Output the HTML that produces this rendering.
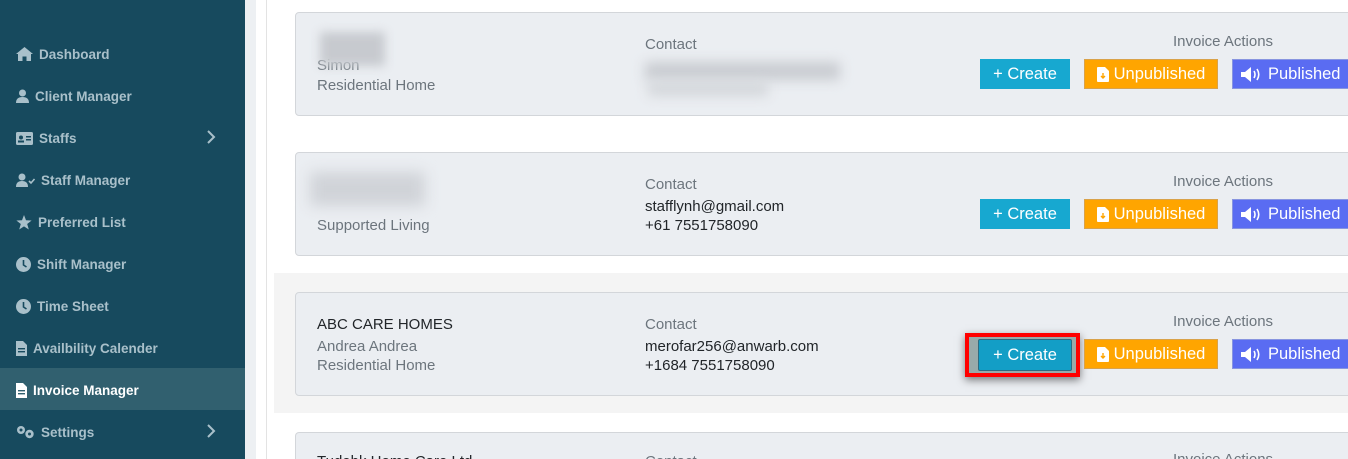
<!DOCTYPE html>
<html style="width:1348px;height:459px;overflow:hidden"><head><meta charset="utf-8"><style>
*{margin:0;padding:0;box-sizing:border-box}
body{width:1348px;height:459px;overflow:hidden;background:#fff;font-family:"Liberation Sans",sans-serif;position:relative}
.sb{position:absolute;left:0;top:0;width:245px;height:459px;background:#174a5e}
.gap{position:absolute;left:245px;top:0;width:11px;height:459px;background:#edf0f3}
.vl{position:absolute;left:266px;top:0;width:1px;height:459px;background:#e3e3e3}
.it{position:absolute;left:16px;color:#a9c0ca;font-size:13.5px;font-weight:bold;display:flex;align-items:center;height:20px}
.it svg{margin-right:6px}
.act{position:absolute;left:0;top:368px;width:245px;height:42px;background:#31606f}
.chev{position:absolute;left:206px}
.hl{position:absolute;left:274px;top:273px;right:0;height:140px;background:#f4f4f4}
.card{position:absolute;left:295px;width:1100px;height:104px;background:#ebeef2;border:1px solid #d3d6da;border-radius:4px}
.t{position:absolute;font-size:15px;color:#6c757d;white-space:nowrap}
.d{color:#212529}
.btn{position:absolute;height:30px;color:#fff;font-size:16.5px;display:flex;align-items:center;justify-content:center}
.btn svg{margin-right:5px}
.bc{left:980px;width:90px;background:#17a8d0}
.bu{left:1084px;width:134px;background:#ffa500;border:1px solid #d9a24a}
.bp{left:1232px;width:120px;background:#5a6cf2;border:1px solid #8895e0;justify-content:flex-start;padding-left:8px}
.blur{position:absolute;background:#c9ccd1;filter:blur(5px)}
</style></head><body>
<div class="sb"></div>
<div class="act"></div>
<div class="gap"></div>
<div class="vl"></div>

<div class="it" style="top:44px"><svg width="17" height="14" viewBox="0 0 17 14"><path d="M8.5 0 L17 7 H15 V14 H10.5 V9.5 H6.5 V14 H2 V7 H0Z" fill="#a9c0ca"/></svg>Dashboard</div>
<div class="it" style="top:86px"><svg width="13" height="14" viewBox="0 0 13 14"><circle cx="6.5" cy="4" r="3.5" fill="#a9c0ca"/><path d="M0 14 Q0 8 6.5 8 Q13 8 13 14Z" fill="#a9c0ca"/></svg>Client Manager</div>
<div class="it" style="top:128px"><svg width="17" height="13" viewBox="0 0 17 13"><rect x="0" y="0" width="17" height="13" rx="1.5" fill="#a9c0ca"/><circle cx="5" cy="5.5" r="2" fill="#174a5e"/><rect x="2" y="8.5" width="6" height="2" fill="#174a5e"/><rect x="10" y="4" width="5" height="1.5" fill="#174a5e"/><rect x="10" y="7" width="5" height="1.5" fill="#174a5e"/></svg>Staffs</div>
<svg class="chev" style="top:130px" width="10" height="14" viewBox="0 0 10 14"><path d="M2 1 L8 7 L2 13" stroke="#a9c0ca" stroke-width="2" fill="none"/></svg>
<div class="it" style="top:170px"><svg width="19" height="14" viewBox="0 0 19 14"><circle cx="6" cy="4" r="3.5" fill="#a9c0ca"/><path d="M0 14 Q0 8 6 8 Q12 8 12 14Z" fill="#a9c0ca"/><path d="M13 8 L15 10 L18.5 6" stroke="#a9c0ca" stroke-width="1.6" fill="none"/></svg>Staff Manager</div>
<div class="it" style="top:212px"><svg width="16" height="15" viewBox="0 0 16 15"><path d="M8 0 L10 5.2 L15.6 5.5 L11.2 9 L12.8 14.5 L8 11.4 L3.2 14.5 L4.8 9 L0.4 5.5 L6 5.2Z" fill="#a9c0ca"/></svg>Preferred List</div>
<div class="it" style="top:254px"><svg width="15" height="15" viewBox="0 0 15 15"><circle cx="7.5" cy="7.5" r="7.5" fill="#a9c0ca"/><path d="M7.5 3 V8 L10.5 10" stroke="#174a5e" stroke-width="1.6" fill="none"/></svg>Shift Manager</div>
<div class="it" style="top:296px"><svg width="15" height="15" viewBox="0 0 15 15"><circle cx="7.5" cy="7.5" r="7.5" fill="#a9c0ca"/><path d="M7.5 3 V8 L10.5 10" stroke="#174a5e" stroke-width="1.6" fill="none"/></svg>Time Sheet</div>
<div class="it" style="top:338px"><svg width="11" height="15" viewBox="0 0 11 15"><path d="M0 0 H7 L11 4 V15 H0Z" fill="#a9c0ca"/><rect x="2" y="7" width="7" height="1.4" fill="#174a5e"/><rect x="2" y="10" width="7" height="1.4" fill="#174a5e"/></svg>Availbility Calender</div>
<div class="it" style="top:380px;color:#fff"><svg width="11" height="15" viewBox="0 0 11 15"><path d="M0 0 H7 L11 4 V15 H0Z" fill="#fff"/><rect x="2" y="7" width="7" height="1.4" fill="#31606f"/><rect x="2" y="10" width="7" height="1.4" fill="#31606f"/></svg>Invoice Manager</div>
<div class="it" style="top:422px"><svg width="19" height="14" viewBox="0 0 19 14"><circle cx="5" cy="5" r="4" fill="#a9c0ca"/><circle cx="5" cy="5" r="1.5" fill="#174a5e"/><circle cx="13.5" cy="9" r="4.2" fill="#a9c0ca"/><circle cx="13.5" cy="9" r="1.5" fill="#174a5e"/></svg>Settings</div>
<svg class="chev" style="top:424px" width="10" height="14" viewBox="0 0 10 14"><path d="M2 1 L8 7 L2 13" stroke="#a9c0ca" stroke-width="2" fill="none"/></svg>

<div class="hl"></div>

<!-- card 1 -->
<div class="card" style="top:12px"></div>
<div class="t" style="left:317px;top:57px">Simon</div>
<div class="blur" style="left:320px;top:32px;width:65px;height:34px;background:#c7cacf"></div>
<div class="t" style="left:317px;top:77px">Residential Home</div>
<div class="t" style="left:645px;top:36px">Contact</div>
<div class="blur" style="left:645px;top:62px;width:195px;height:18px;filter:blur(6px)"></div>
<div class="blur" style="left:648px;top:82px;width:120px;height:14px;filter:blur(6px);background:#d3d6da"></div>
<div class="t" style="left:1173px;top:33px">Invoice Actions</div>
<div class="btn bc" style="top:59px">+ Create</div>
<div class="btn bu" style="top:59px"><svg width="12" height="15" viewBox="0 0 12 15"><path d="M0 1 Q0 0 1 0 H8 L12 4 V14 Q12 15 11 15 H1 Q0 15 0 14Z" fill="#fff"/><path d="M6 6 V11 M4 9 L6 11 L8 9" stroke="#ffa500" stroke-width="1.4" fill="none"/></svg>Unpublished</div>
<div class="btn bp" style="top:59px"><svg width="22" height="15" viewBox="0 0 22 15"><path d="M0 5 H4 L10 0 V15 L4 10 H0Z" fill="#fff"/><path d="M13 4 Q15 7.5 13 11 M16 2 Q19.5 7.5 16 13" stroke="#fff" stroke-width="1.6" fill="none"/></svg>Published</div>

<!-- card 2 -->
<div class="card" style="top:152px"></div>
<div class="blur" style="left:310px;top:172px;width:115px;height:34px;background:#d0d3d8;filter:blur(7px)"></div>
<div class="t" style="left:317px;top:217px">Supported Living</div>
<div class="t" style="left:645px;top:176px">Contact</div>
<div class="t d" style="left:645px;top:198px">stafflynh@gmail.com</div>
<div class="t d" style="left:645px;top:217px">+61 7551758090</div>
<div class="t" style="left:1173px;top:173px">Invoice Actions</div>
<div class="btn bc" style="top:199px">+ Create</div>
<div class="btn bu" style="top:199px"><svg width="12" height="15" viewBox="0 0 12 15"><path d="M0 1 Q0 0 1 0 H8 L12 4 V14 Q12 15 11 15 H1 Q0 15 0 14Z" fill="#fff"/><path d="M6 6 V11 M4 9 L6 11 L8 9" stroke="#ffa500" stroke-width="1.4" fill="none"/></svg>Unpublished</div>
<div class="btn bp" style="top:199px"><svg width="22" height="15" viewBox="0 0 22 15"><path d="M0 5 H4 L10 0 V15 L4 10 H0Z" fill="#fff"/><path d="M13 4 Q15 7.5 13 11 M16 2 Q19.5 7.5 16 13" stroke="#fff" stroke-width="1.6" fill="none"/></svg>Published</div>

<!-- card 3 -->
<div class="card" style="top:292px"></div>
<div class="t d" style="left:317px;top:316px">ABC CARE HOMES</div>
<div class="t" style="left:317px;top:338px">Andrea Andrea</div>
<div class="t" style="left:317px;top:357px">Residential Home</div>
<div class="t" style="left:645px;top:316px">Contact</div>
<div class="t d" style="left:645px;top:338px">merofar256@anwarb.com</div>
<div class="t d" style="left:645px;top:357px">+1684 7551758090</div>
<div class="t" style="left:1173px;top:313px">Invoice Actions</div>
<div style="position:absolute;left:965px;top:333px;width:115px;height:44px;border:4px solid #f00;box-shadow:0 3px 8px rgba(0,0,0,.5);background:#9aa"></div>
<div class="btn" style="left:978px;top:339px;width:94px;height:32px;background:#139ec6;border:1px solid #2e6b80;border-radius:2px">+ Create</div>
<div class="btn bu" style="top:339px"><svg width="12" height="15" viewBox="0 0 12 15"><path d="M0 1 Q0 0 1 0 H8 L12 4 V14 Q12 15 11 15 H1 Q0 15 0 14Z" fill="#fff"/><path d="M6 6 V11 M4 9 L6 11 L8 9" stroke="#ffa500" stroke-width="1.4" fill="none"/></svg>Unpublished</div>
<div class="btn bp" style="top:339px"><svg width="22" height="15" viewBox="0 0 22 15"><path d="M0 5 H4 L10 0 V15 L4 10 H0Z" fill="#fff"/><path d="M13 4 Q15 7.5 13 11 M16 2 Q19.5 7.5 16 13" stroke="#fff" stroke-width="1.6" fill="none"/></svg>Published</div>

<!-- card 4 -->
<div class="card" style="top:432px;height:27px;border-bottom:none;border-radius:4px 4px 0 0"></div>
<div class="t d" style="left:317px;top:453px">Tudebk Home Care Ltd</div>
<div class="t" style="left:645px;top:453px">Contact</div>
<div class="t" style="left:1173px;top:451px">Invoice Actions</div>
</body></html>
